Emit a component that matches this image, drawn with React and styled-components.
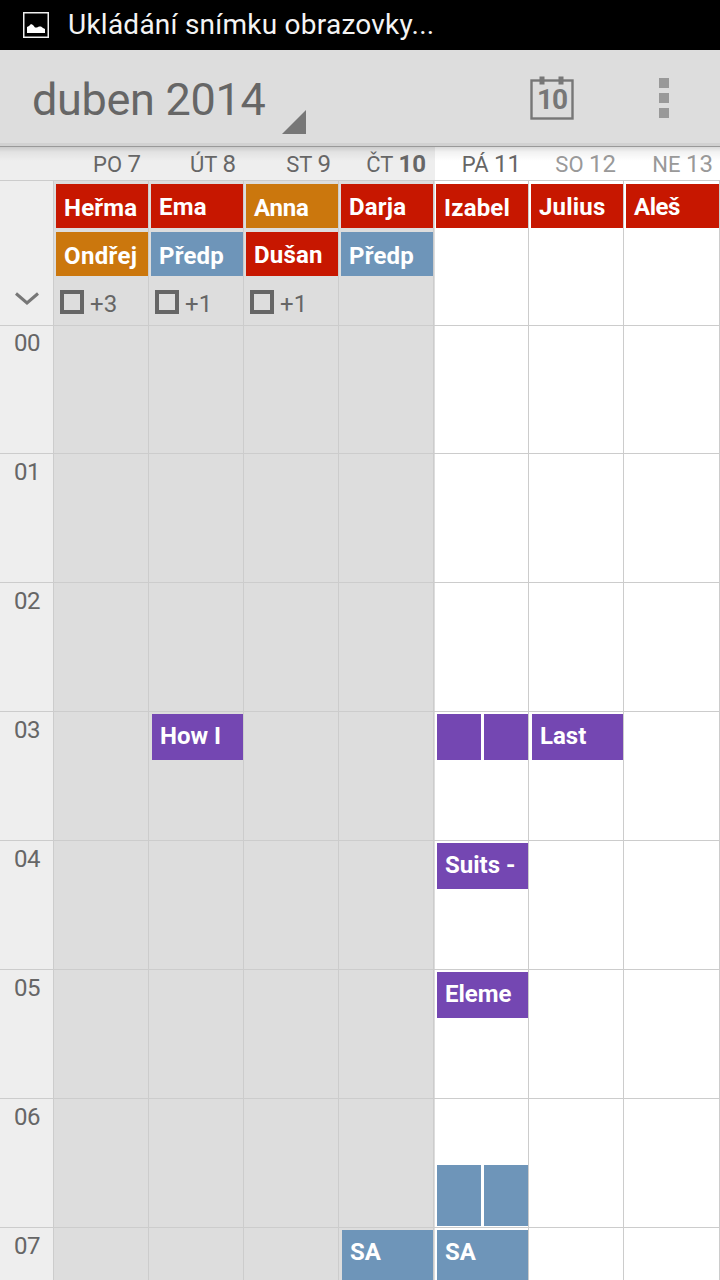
import React from "react";
import styled, { createGlobalStyle } from "styled-components";

const GlobalStyle = createGlobalStyle`
  *, *::before, *::after { box-sizing: border-box; }
  body { margin: 0; overflow: hidden; font-family: Roboto, "Noto Sans", sans-serif; }
`;

const RED = "#c71700";
const ORANGE = "#cb770d";
const BLUE = "#6e95b9";
const PURPLE = "#7447b2";

const Screen = styled.div`
  width: 720px;
  height: 1280px;
  overflow: hidden;
  display: flex;
  flex-direction: column;
  background: #fff;
`;

const StatusBar = styled.header`
  flex: none;
  height: 50px;
  padding-left: 23px;
  display: flex;
  align-items: center;
  gap: 19px;
  background: #000;
  color: #f4f4f4;
  font-size: 28px;
  line-height: 50px;
  white-space: nowrap;
`;

const StatusText = styled.span`
  height: 50px;
  letter-spacing: 0.24px;
`;

const ActionBar = styled.div`
  flex: none;
  height: 97px;
  padding: 0 51px 0 32px;
  display: flex;
  align-items: flex-start;
  background: linear-gradient(#ddd 93px, #d1d1d1 93px, #d1d1d1 96px, #999 96px);
`;

const MonthTitle = styled.h1`
  margin: 0;
  width: 250px;
  padding-top: 24px;
  font-size: 45px;
  font-weight: 400;
  line-height: 52px;
  letter-spacing: -0.3px;
  color: #666;
  white-space: nowrap;
`;

const SpinnerArrow = styled.svg`
  margin-top: 60px;
`;

const TodayIcon = styled.svg`
  margin: 25px 0 0 auto;
`;

const Overflow = styled.div`
  width: 10px;
  margin: 28px 0 0 84px;
  display: flex;
  flex-direction: column;
  gap: 5px;
`;

const OverflowDot = styled.i`
  height: 10px;
  background: #999;
`;

const tracks = "53px repeat(6, 95px) 97px";

const DayHeader = styled.div`
  flex: none;
  height: 34px;
  display: grid;
  grid-template-columns: ${tracks};
  border-bottom: 1px solid #ccc;
  background:
    linear-gradient(rgba(0, 0, 0, 0.15), rgba(0, 0, 0, 0.05) 5px, rgba(0, 0, 0, 0) 14px),
    linear-gradient(90deg, #eee 435px, #fff 435px);
`;

const DayName = styled.div`
  padding: 3px 7px 0 0;
  text-align: right;
  font-size: 22px;
  line-height: 28px;
  color: ${(p) => (p.$weekend ? "#999" : "#666")};
  white-space: nowrap;
`;

const DayNumber = styled.span`
  font-size: 24px;
  font-weight: ${(p) => (p.$today ? 700 : 400)};
`;

const AllDayRow = styled.div`
  flex: none;
  height: 145px;
  display: grid;
  grid-template-columns: ${tracks};
  border-bottom: 1px solid #ccc;
`;

const ExpandGutter = styled.div`
  display: flex;
  align-items: flex-end;
  padding: 0 0 19px 15px;
  background: #eee;
`;

const dayCell = ({ $past, $first, $last }) => `
  min-width: 0;
  border-left: 1px solid #ccc;
  ${$last ? "border-right: 1px solid #ccc;" : ""}
  background: ${$past ? "#ddd" : $first ? "linear-gradient(90deg, #ddd 1px, #fff 1px)" : "#fff"};
`;

const AllDayCell = styled.div`
  ${dayCell}
  display: flex;
  flex-direction: column;
  gap: 4px;
  padding: 3px 0 0 2px;
`;

const AllDayEvent = styled.div`
  height: 44px;
  padding: ${(p) => (p.$low ? 10 : 9)}px 0 0 8px;
  overflow: hidden;
  background: ${(p) => p.$color};
  color: #fff;
  font-size: 24px;
  font-weight: 700;
  line-height: 28px;
  letter-spacing: ${(p) => p.$tracking ?? 0.2}px;
  white-space: nowrap;
`;

const More = styled.div`
  display: flex;
  align-items: center;
  gap: 6px;
  padding: 10px 0 0 4px;
  color: #666;
  font-size: 24px;
  line-height: 28px;
`;

const MoreBox = styled.i`
  width: 24px;
  height: 24px;
  margin-top: -4px;
  border: 4px solid #666;
`;

const HourRow = styled.div`
  flex: none;
  height: ${(p) => (p.$first ? 128 : 129)}px;
  display: grid;
  grid-template-columns: ${tracks};
  border-bottom: 1px solid #ccc;
`;

const HourLabel = styled.div`
  padding: ${(p) => (p.$first ? 3 : 4)}px 0 0 14px;
  background: #eee;
  color: #666;
  font-size: 24px;
  line-height: 28px;
  letter-spacing: -0.5px;
`;

const HourCell = styled.div`
  ${dayCell}
  display: flex;
  align-items: flex-start;
  gap: 3px;
  padding: 2px 0 0 3px;
`;

const TimedEvent = styled.div`
  flex: 1;
  min-width: 0;
  height: ${(p) => p.$height || 46}px;
  margin-top: ${(p) => p.$offset || 0}px;
  padding: 8px 0 0 8px;
  overflow: hidden;
  background: ${(p) => p.$color};
  color: #fff;
  font-size: 24px;
  font-weight: 700;
  line-height: 28px;
  white-space: nowrap;
`;

const days = [
  { name: "PO", num: 7, past: true, more: 3, events: [["Heřma", RED, true], ["Ondřej", ORANGE, true, 0.35]] },
  { name: "ÚT", num: 8, past: true, more: 1, events: [["Ema", RED], ["Předp", BLUE, true]] },
  { name: "ST", num: 9, past: true, more: 1, events: [["Anna", ORANGE, true, -0.2], ["Dušan", RED]] },
  { name: "ČT", num: 10, past: true, today: true, events: [["Darja", RED], ["Předp", BLUE, true]] },
  { name: "PÁ", num: 11, first: true, events: [["Izabel", RED, true]] },
  { name: "SO", num: 12, weekend: true, events: [["Julius", RED]] },
  { name: "NE", num: 13, weekend: true, last: true, events: [["Aleš", RED, false, -0.5]] },
];

const hours = ["00", "01", "02", "03", "04", "05", "06", "07"];

const timed = {
  "03-1": [{ text: "How I", color: PURPLE }],
  "03-4": [{ color: PURPLE }, { color: PURPLE }],
  "03-5": [{ text: "Last", color: PURPLE }],
  "04-4": [{ text: "Suits -", color: PURPLE }],
  "05-4": [{ text: "Eleme", color: PURPLE }],
  "06-4": [
    { color: BLUE, offset: 64, height: 61 },
    { color: BLUE, offset: 64, height: 61 },
  ],
  "07-3": [{ text: "SA", color: BLUE, height: 126 }],
  "07-4": [{ text: "SA", color: BLUE, height: 126 }],
};

export default function App() {
  return (
    <Screen>
      <GlobalStyle />
      <StatusBar>
        <svg width="26" height="26" viewBox="0 0 26 26">
          <rect x="0.75" y="0.75" width="24.5" height="24.5" fill="none" stroke="#f0f0f0" strokeWidth="1.5" />
          <path d="M4 21V15L6 14L8 12L10 13L12 15.5L14 15.5L16 14.5L18 14.5L20 16L22 17V21Z" fill="#fff" />
        </svg>
        <StatusText>Ukládání snímku obrazovky...</StatusText>
      </StatusBar>

      <ActionBar>
        <MonthTitle>duben 2014</MonthTitle>
        <SpinnerArrow width="24" height="24" viewBox="0 0 24 24">
          <path d="M24 0V24H0Z" fill="#777" />
        </SpinnerArrow>
        <TodayIcon width="46" height="46" viewBox="0 0 46 46">
          <rect x="2.5" y="5.5" width="41" height="38" fill="none" stroke="#777" strokeWidth="2.4" />
          <path d="M10.5 1.5h5v8h-5zM29.5 1.5h5v8h-5z" fill="#777" />
          <text x="8" y="34" fontSize="28" fontWeight="700" fill="#777" textLength="31" lengthAdjust="spacing">10</text>
        </TodayIcon>
        <Overflow>
          <OverflowDot />
          <OverflowDot />
          <OverflowDot />
        </Overflow>
      </ActionBar>

      <DayHeader>
        <span />
        {days.map((d) => (
          <DayName key={d.num} $weekend={d.weekend}>
            {d.name} <DayNumber $today={d.today}>{d.num}</DayNumber>
          </DayName>
        ))}
      </DayHeader>

      <AllDayRow>
        <ExpandGutter>
          <svg width="24" height="14" viewBox="0 0 24 14">
            <path d="M1 1.5L12 11L23 1.5" fill="none" stroke="#777" strokeWidth="3" />
          </svg>
        </ExpandGutter>
        {days.map((d) => (
          <AllDayCell key={d.num} $past={d.past} $first={d.first} $last={d.last}>
            {d.events.map(([text, color, low, tracking]) => (
              <AllDayEvent key={text} $color={color} $low={low} $tracking={tracking}>{text}</AllDayEvent>
            ))}
            {d.more && (
              <More>
                <MoreBox />
                +{d.more}
              </More>
            )}
          </AllDayCell>
        ))}
      </AllDayRow>

      {hours.map((h, i) => (
        <HourRow key={h} $first={i === 0}>
          <HourLabel $first={i === 0}>{h}</HourLabel>
          {days.map((d, j) => (
            <HourCell key={d.num} $past={d.past} $first={d.first} $last={d.last}>
              {(timed[`${h}-${j}`] || []).map((e, k) => (
                <TimedEvent key={k} $color={e.color} $offset={e.offset} $height={e.height}>
                  {e.text}
                </TimedEvent>
              ))}
            </HourCell>
          ))}
        </HourRow>
      ))}
    </Screen>
  );
}
